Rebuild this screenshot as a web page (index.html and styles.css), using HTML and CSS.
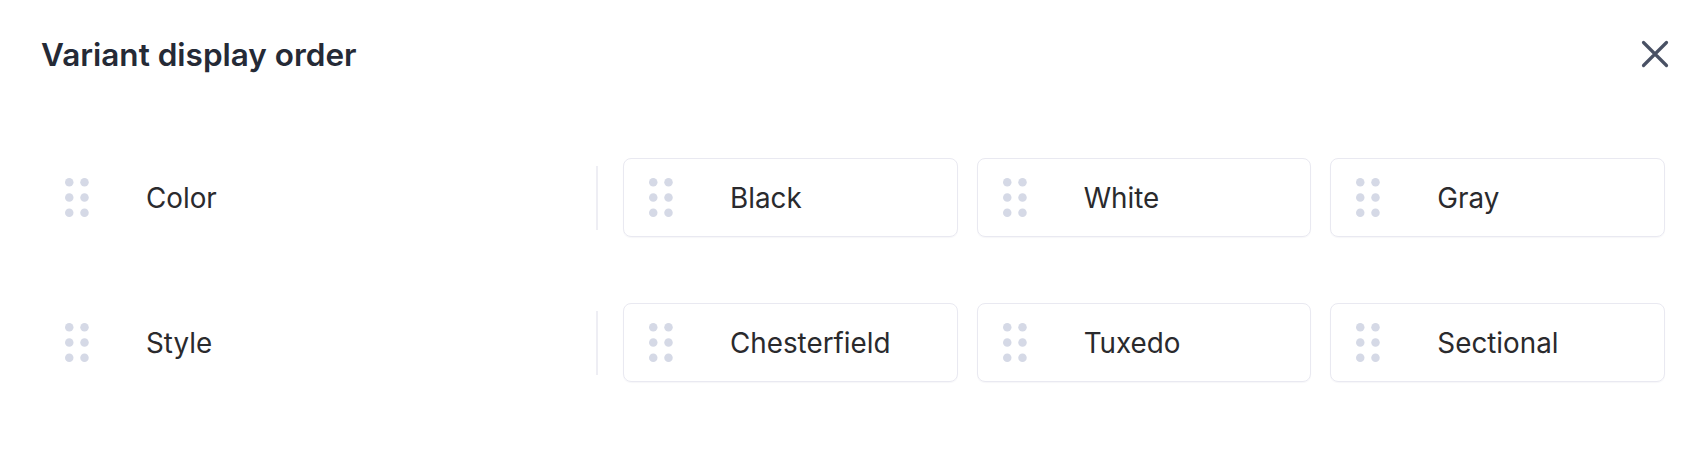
FILE: index.html
```html
<!DOCTYPE html>
<html lang="en">

<head>
	<meta charset="UTF-8">
	<title>Variant display order</title>
	<link rel="stylesheet" href="styles.css">
</head>

<body>
	<div class="modal">
		<div class="header">
			<h1 class="title">Variant display order</h1>
			<button class="close" type="button">
				<svg width="30" height="30" viewBox="0 0 30 30">
					<path d="M3.5 3.5 L26.5 26.5 M26.5 3.5 L3.5 26.5" />
				</svg>
			</button>
		</div>

		<div class="rows">
			<div class="row">
				<div class="option">
					<svg class="grip" viewBox="0 0 24 39"><circle cx="4.25" cy="4.25" r="4.25"/><circle cx="19.5" cy="4.25" r="4.25"/><circle cx="4.25" cy="19.5" r="4.25"/><circle cx="19.5" cy="19.5" r="4.25"/><circle cx="4.25" cy="34.75" r="4.25"/><circle cx="19.5" cy="34.75" r="4.25"/></svg>
					<span class="name">Color</span>
				</div>
				<div class="sep"></div>
				<div class="values">
					<div class="card">
						<svg class="grip" viewBox="0 0 24 39"><circle cx="4.25" cy="4.25" r="4.25"/><circle cx="19.5" cy="4.25" r="4.25"/><circle cx="4.25" cy="19.5" r="4.25"/><circle cx="19.5" cy="19.5" r="4.25"/><circle cx="4.25" cy="34.75" r="4.25"/><circle cx="19.5" cy="34.75" r="4.25"/></svg>
						<span class="name">Black</span>
					</div>
					<div class="card">
						<svg class="grip" viewBox="0 0 24 39"><circle cx="4.25" cy="4.25" r="4.25"/><circle cx="19.5" cy="4.25" r="4.25"/><circle cx="4.25" cy="19.5" r="4.25"/><circle cx="19.5" cy="19.5" r="4.25"/><circle cx="4.25" cy="34.75" r="4.25"/><circle cx="19.5" cy="34.75" r="4.25"/></svg>
						<span class="name">White</span>
					</div>
					<div class="card">
						<svg class="grip" viewBox="0 0 24 39"><circle cx="4.25" cy="4.25" r="4.25"/><circle cx="19.5" cy="4.25" r="4.25"/><circle cx="4.25" cy="19.5" r="4.25"/><circle cx="19.5" cy="19.5" r="4.25"/><circle cx="4.25" cy="34.75" r="4.25"/><circle cx="19.5" cy="34.75" r="4.25"/></svg>
						<span class="name">Gray</span>
					</div>
				</div>
			</div>

			<div class="row">
				<div class="option">
					<svg class="grip" viewBox="0 0 24 39"><circle cx="4.25" cy="4.25" r="4.25"/><circle cx="19.5" cy="4.25" r="4.25"/><circle cx="4.25" cy="19.5" r="4.25"/><circle cx="19.5" cy="19.5" r="4.25"/><circle cx="4.25" cy="34.75" r="4.25"/><circle cx="19.5" cy="34.75" r="4.25"/></svg>
					<span class="name">Style</span>
				</div>
				<div class="sep"></div>
				<div class="values">
					<div class="card">
						<svg class="grip" viewBox="0 0 24 39"><circle cx="4.25" cy="4.25" r="4.25"/><circle cx="19.5" cy="4.25" r="4.25"/><circle cx="4.25" cy="19.5" r="4.25"/><circle cx="19.5" cy="19.5" r="4.25"/><circle cx="4.25" cy="34.75" r="4.25"/><circle cx="19.5" cy="34.75" r="4.25"/></svg>
						<span class="name">Chesterfield</span>
					</div>
					<div class="card">
						<svg class="grip" viewBox="0 0 24 39"><circle cx="4.25" cy="4.25" r="4.25"/><circle cx="19.5" cy="4.25" r="4.25"/><circle cx="4.25" cy="19.5" r="4.25"/><circle cx="19.5" cy="19.5" r="4.25"/><circle cx="4.25" cy="34.75" r="4.25"/><circle cx="19.5" cy="34.75" r="4.25"/></svg>
						<span class="name">Tuxedo</span>
					</div>
					<div class="card">
						<svg class="grip" viewBox="0 0 24 39"><circle cx="4.25" cy="4.25" r="4.25"/><circle cx="19.5" cy="4.25" r="4.25"/><circle cx="4.25" cy="19.5" r="4.25"/><circle cx="19.5" cy="19.5" r="4.25"/><circle cx="4.25" cy="34.75" r="4.25"/><circle cx="19.5" cy="34.75" r="4.25"/></svg>
						<span class="name">Sectional</span>
					</div>
				</div>
			</div>
		</div>
	</div>
</body>

</html>
```

FILE: styles.css
```css
* {
	margin: 0;
	padding: 0;
	box-sizing: border-box;
}

body {
	background: #fff;
	font-family: Inter, "Noto Sans", sans-serif;
}

.modal {
	width: 1700px;
	height: 472px;
	padding: 0 35px 0 41px;
	background: #fff;
}

.header {
	height: 108px;
	display: flex;
	align-items: center;
	justify-content: space-between;
}

.title {
	font-size: 31.5px;
	font-weight: 600;
	color: #252a36;
}

.close {
	border: none;
	background: none;
	width: 30px;
	height: 30px;
	margin-right: -5px;
	display: flex;
}

.close path {
	stroke: #495164;
	stroke-width: 3.2;
	stroke-linecap: round;
	fill: none;
}

.rows {
	margin-top: 50px;
	display: flex;
	flex-direction: column;
	gap: 66px;
}

.row {
	display: flex;
	align-items: center;
	height: 79px;
}

.option {
	width: 555px;
	display: flex;
	align-items: center;
	padding-left: 24px;
}

.grip {
	width: 24px;
	height: 39px;
	fill: #d5d9e6;
	flex-shrink: 0;
}

.name {
	font-size: 27.8px;
	color: #2a2a2d;
	margin-left: 57px;
}

.sep {
	width: 2px;
	height: 64px;
	background: #eeeef4;
	margin-right: 25px;
}

.values {
	flex: 1;
	display: flex;
	gap: 19px;
}

.card {
	flex: 1;
	height: 79px;
	display: flex;
	align-items: center;
	padding-left: 25px;
	border: 1.5px solid #e9e9f1;
	border-radius: 8px;
	box-shadow: 0 1px 1px rgba(40, 40, 90, 0.04);
}
```
